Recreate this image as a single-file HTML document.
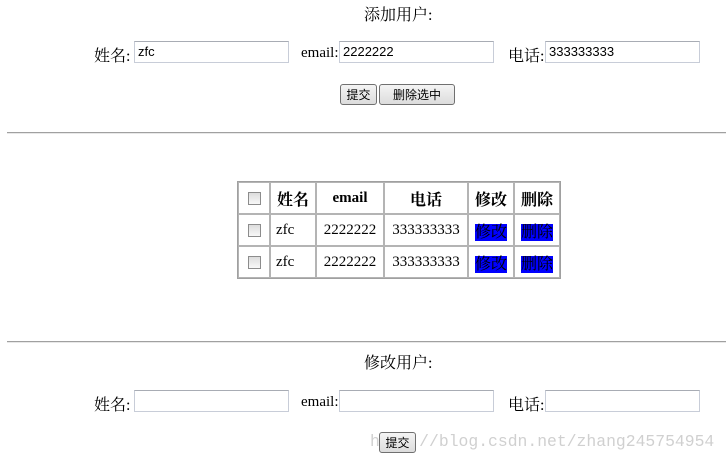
<!DOCTYPE html>
<html><head><meta charset="utf-8"><style>
body{margin:0;width:726px;height:465px;position:relative;background:#fff;font-family:"Liberation Serif","Noto Serif CJK SC",serif;font-size:16px;color:#000;overflow:hidden}
.a{position:absolute;white-space:nowrap}
.in{position:absolute;border:1px solid #c8cdd8;border-top-color:#a8acb4;background:#fff;box-sizing:border-box;height:22px;font-family:"Liberation Sans",sans-serif;font-size:13px;line-height:20px;padding-left:3px}
.bt{position:absolute;height:21px;border:1px solid #707070;border-radius:3px;background:linear-gradient(#f4f4f4,#dcdcdc);box-sizing:border-box;font-family:"Noto Sans CJK SC",sans-serif;font-size:12px;line-height:19px;text-align:center}
.hr{position:absolute;left:7px;width:719px;height:0;border-top:1px solid #a0a0a0;border-bottom:1px solid #e8e8e8}
table{position:absolute;left:237px;top:181px;border-collapse:separate;border-spacing:0;border:1px solid #a0a0a0}
td{border:1px solid #b4b4b4;height:30px;padding:0;font-size:15px;text-align:center;vertical-align:middle}
th{border:1px solid #b4b4b4;height:30px;padding:0;vertical-align:middle}
.cb{display:inline-block;width:11px;height:11px;border:1px solid #8c8c8c;background:linear-gradient(#ddd,#f8f8f8);vertical-align:middle}
.bl{background:#0000ff;color:#000;font-size:16px}
.wm{font-family:"Liberation Mono","DejaVu Sans Mono",monospace;color:#d0d0d0;font-size:16.4px}
</style></head><body>
<div class="a" style="left:364px;top:2px;font-size:16px">添加用户:</div>
<div class="a" style="left:94px;top:43px">姓名:</div>
<div class="in" style="left:134px;top:41px;width:155px">zfc</div>
<div class="a" style="left:301px;top:45px;font-size:15px">email:</div>
<div class="in" style="left:339px;top:41px;width:155px">2222222</div>
<div class="a" style="left:508px;top:43px">电话:</div>
<div class="in" style="left:545px;top:41px;width:155px">333333333</div>
<div class="bt" style="left:340px;top:84px;width:37px">提交</div>
<div class="bt" style="left:379px;top:84px;width:76px">删除选中</div>
<div class="hr" style="top:132px"></div>
<table>
<tr><th style="width:30px"><span class="cb"></span></th><th style="width:44px;font-size:16px">姓名</th><th style="width:66px;font-size:15px">email</th><th style="width:82px;font-size:16px">电话</th><th style="width:44px;font-size:16px">修改</th><th style="width:44px;font-size:16px">删除</th></tr>
<tr><td><span class="cb"></span></td><td style="text-align:left;padding-left:5px">zfc</td><td>2222222</td><td>333333333</td><td><span class="bl">修改</span></td><td><span class="bl">删除</span></td></tr>
<tr><td><span class="cb"></span></td><td style="text-align:left;padding-left:5px">zfc</td><td>2222222</td><td>333333333</td><td><span class="bl">修改</span></td><td><span class="bl">删除</span></td></tr>
</table>
<div class="hr" style="top:341px"></div>
<div class="a" style="left:364px;top:350px">修改用户:</div>
<div class="a" style="left:94px;top:392px">姓名:</div>
<div class="in" style="left:134px;top:390px;width:155px"></div>
<div class="a" style="left:301px;top:394px;font-size:15px">email:</div>
<div class="in" style="left:339px;top:390px;width:155px"></div>
<div class="a" style="left:508px;top:392px">电话:</div>
<div class="in" style="left:545px;top:390px;width:155px"></div>
<div class="a wm" style="left:370px;top:432px">http://blog.csdn.net/zhang245754954</div>
<div class="bt" style="left:379px;top:432px;width:37px">提交</div>
</body></html>
